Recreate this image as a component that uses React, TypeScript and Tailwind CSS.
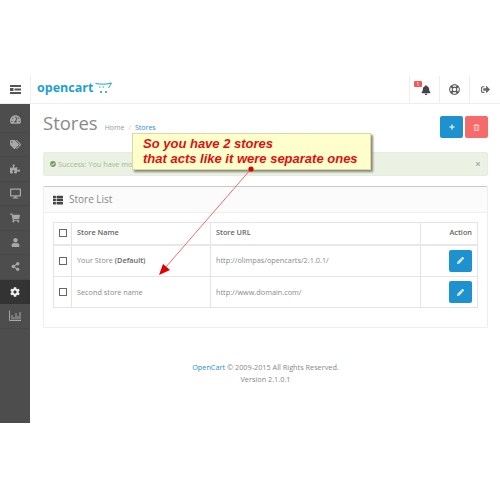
import {
  FaBell,
  FaCheckCircle,
  FaCog,
  FaDesktop,
  FaPencilAlt,
  FaPlus,
  FaPuzzlePiece,
  FaRegLifeRing,
  FaRegTrashAlt,
  FaShareAlt,
  FaShoppingCart,
  FaSignOutAlt,
  FaTachometerAlt,
  FaTags,
  FaThList,
  FaTimes,
  FaUser,
} from 'react-icons/fa';

function BarChartIcon() {
  return (
    <svg width="12" height="11" viewBox="0 0 12 11" fill="none" stroke="currentColor" strokeWidth="1">
      <path d="M0.500 0.500 V10.500 H12" />
      <path d="M3 9.500 V5 M5 9.500 V7 M7 9.500 V3 M9 9.500 V6 M11 9.500 V2" />
    </svg>
  );
}

function MenuToggleIcon() {
  return (
    <svg width="11" height="9" viewBox="0 0 11 9" className="text-[#555]">
      <path fill="currentColor" d="M0 0h11v2H0zM4.500 3.500h6.500v2H4.500zM0 7h11v2H0z" />
      <path fill="currentColor" d="M0 3h3.500v3H0z" />
    </svg>
  );
}

const menu = [
  { icon: FaTachometerAlt, size: 11 },
  { icon: FaTags, size: 11 },
  { icon: FaPuzzlePiece, size: 10 },
  { icon: FaDesktop, size: 11 },
  { icon: FaShoppingCart, size: 10 },
  { icon: FaUser, size: 9 },
  { icon: FaShareAlt, size: 9 },
  { icon: FaCog, size: 10, active: true },
  { icon: BarChartIcon, size: 11 },
];

const stores = [
  { name: 'Your Store', suffix: '(Default)', url: 'http://olimpas/opencarts/2.1.0.1/', height: 'h-[32px]' },
  { name: 'Second store name', suffix: '', url: 'http://www.domain.com/', height: 'h-[31px]' },
];

function Checkbox() {
  return <span className="block h-[8px] w-[8px] border border-[#666] bg-white" />;
}

function Header() {
  return (
    <header className="flex h-[28px] items-stretch border-b border-[#eeeeee] bg-white">
      <div className="flex w-[31px] items-center justify-center border-r border-[#eeeeee]">
        <MenuToggleIcon />
      </div>
      <div className="flex items-center gap-[2px] pb-[2px] pl-[6px]">
        <span className="text-[12.5px] leading-none font-bold text-[#1f9fd0]">opencart</span>
        <svg width="17" height="12" viewBox="0 0 17 12" fill="none" className="mt-[-1px]">
          <path d="M0.500 1.500 C6 2.500 11 2.500 16.500 1 L13.500 6" stroke="#1f9fd0" strokeWidth="1" />
          <path d="M4 5 L11 5" stroke="#1f9fd0" strokeWidth="1" strokeDasharray="1.500 2" />
          <circle cx="6" cy="10" r="1.100" fill="#1f9fd0" />
          <circle cx="11" cy="10" r="1.100" fill="#1f9fd0" />
        </svg>
      </div>
      <div className="ml-auto flex items-stretch">
        <div className="relative flex w-[30px] items-center justify-center border-l border-[#eeeeee]">
          <FaBell size={10} className="mt-[1px] ml-[3px] text-[#444]" />
          <span className="absolute top-[5px] left-[4px] flex h-[6px] w-[8px] items-center justify-center rounded-[1px] bg-[#ef5b5b] text-[5px] leading-none text-white">
            1
          </span>
        </div>
        <div className="flex w-[30px] items-center justify-center border-l border-[#eeeeee]">
          <FaRegLifeRing size={11} className="text-[#555]" />
        </div>
        <div className="flex w-[31px] items-center justify-center border-l border-[#eeeeee]">
          <FaSignOutAlt size={9} className="text-[#666]" />
        </div>
      </div>
    </header>
  );
}

function Sidebar() {
  return (
    <aside className="flex h-[319px] w-[30px] shrink-0 flex-col bg-[#4d4d4d] pt-[4px]">
      {menu.map((item, i) => {
        const Icon = item.icon;
        return (
          <div
            key={i}
            className={
              item.active
                ? 'flex h-[24.5px] items-center justify-center bg-[#333333] text-[#eeeeee]'
                : 'flex h-[24.5px] items-center justify-center border-b border-[#464646] text-[#a8a8a8]'
            }
          >
            <Icon size={item.size} />
          </div>
        );
      })}
    </aside>
  );
}

function StoreTable() {
  return (
    <table className="w-[425px] table-fixed border-collapse border border-[#e4e4e4] text-[7.3px] text-[#8a8a8a]">
      <thead>
        <tr className="h-[22px] border-b-2 border-[#e8e8e8] text-[#666]">
          <th className="w-[18px] border-r border-[#e4e4e4] pl-[5px] text-left">
            <Checkbox />
          </th>
          <th className="w-[139px] border-r border-[#e4e4e4] pb-[1px] pl-[5px] text-left font-semibold">Store Name</th>
          <th className="w-[210px] border-r border-[#e4e4e4] pb-[1px] pl-[5px] text-left font-semibold">Store URL</th>
          <th className="pr-[5px] pb-[1px] text-right font-semibold">Action</th>
        </tr>
      </thead>
      <tbody>
        {stores.map((store) => (
          <tr key={store.name} className={store.height + ' border-b border-[#e4e4e4]'}>
            <td className="border-r border-[#e4e4e4] pl-[5px]">
              <Checkbox />
            </td>
            <td className="border-r border-[#e4e4e4] pl-[5px]">
              {store.name} {store.suffix && <span className="font-semibold text-[#666]">{store.suffix}</span>}
            </td>
            <td className="border-r border-[#e4e4e4] pl-[5px]">{store.url}</td>
            <td className="pr-[5px]">
              <span className="ml-auto flex h-[22px] w-[23px] items-center justify-center rounded-[2px] bg-[#1e91cf] text-white">
                <FaPencilAlt size={7} />
              </span>
            </td>
          </tr>
        ))}
      </tbody>
    </table>
  );
}

function Content() {
  return (
    <main className="min-w-0 flex-1 pt-[7px] pr-[12px] pl-[13px]">
      <div className="flex h-[27px] items-center justify-between">
        <div className="flex items-baseline">
          <h1 className="mt-[-2px] text-[18.5px] leading-none text-[#8a8a8a]">Stores</h1>
          <span className="ml-[7px] text-[7px] text-[#999]">Home</span>
          <span className="mx-[4px] text-[7px] text-[#ccc]">/</span>
          <span className="text-[7px] text-[#1e91cf]">Stores</span>
        </div>
        <div className="mt-[5px] flex gap-[2px]">
          <span className="flex h-[22px] w-[23px] items-center justify-center rounded-[2px] bg-[#1e91cf] text-white">
            <FaPlus size={6} />
          </span>
          <span className="flex h-[22px] w-[23px] items-center justify-center rounded-[2px] bg-[#f56b6b] text-[#fbdcdc]">
            <FaRegTrashAlt size={7} />
          </span>
        </div>
      </div>

      <div className="mt-[14px] flex h-[24px] w-[445px] items-center rounded-[2px] border border-[#e6eddf] bg-[#ebf1e3] px-[6px] text-[7.3px] text-[#9dbb8c]">
        <FaCheckCircle size={6} className="mr-[2px] text-[#6f9a5b]" />
        <span>Success: You have modified stores!</span>
        <FaTimes size={6} className="ml-auto text-[#aaa]" />
      </div>

      <section className="mt-[10px] h-[142px] w-[445px] rounded-[2px] border border-[#eeeeee] border-t-[#c8c8c8]">
        <div className="flex h-[26px] items-center border-b border-[#eeeeee] bg-[#fbfbfb] pl-[9px] text-[#888]">
          <FaThList size={10} className="text-[#444]" />
          <span className="ml-[6px] text-[10px]">Store List</span>
        </div>
        <div className="px-[9px] pt-[9px]">
          <StoreTable />
        </div>
      </section>

      <footer className="mt-[33px] w-[445px] text-center text-[7.3px] leading-[12px] text-[#888]">
        <div>
          <span className="text-[#1e91cf]">OpenCart</span> © 2009-2015 All Rights Reserved.
        </div>
        <div>Version 2.1.0.1</div>
      </footer>
    </main>
  );
}

function Callout() {
  return (
    <>
      <div className="absolute top-[133px] left-[132px] h-[37px] w-[239px] border border-[#d8d8a8] bg-[#ffffcc] pt-[2px] pl-[10px] font-['Liberation_Sans',sans-serif] text-[13px] leading-[15px] font-bold text-[#e01010] italic shadow-[2px_2px_2px_#8a8a7a]">
        <div>So you have 2 stores</div>
        <div>that acts like it were separate ones</div>
      </div>
      <svg width="500" height="500" viewBox="0 0 500 500" className="pointer-events-none absolute top-0 left-0">
        <line x1="251" y1="169" x2="165" y2="268" stroke="#e87070" strokeWidth="1" />
        <polygon points="159,275 163,264 170,270" fill="#e00000" />
        <circle cx="251" cy="169" r="2.600" fill="#d80000" />
      </svg>
    </>
  );
}

export default function App() {
  return (
    <div className="relative h-[500px] w-[500px] overflow-hidden bg-white font-['Open_Sans',sans-serif]">
      <div className="h-[76px]" />
      <Header />
      <div className="flex">
        <Sidebar />
        <Content />
      </div>
      <Callout />
    </div>
  );
}
